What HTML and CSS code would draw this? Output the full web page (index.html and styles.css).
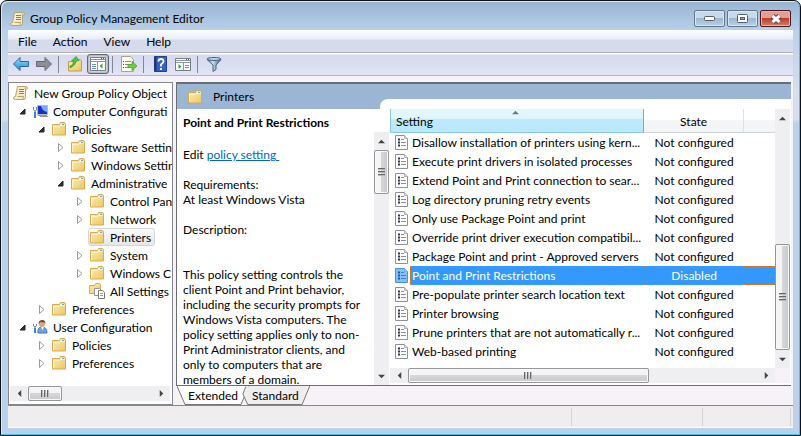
FILE: index.html
```html
<!DOCTYPE html>
<html lang="en">
<head>
    <meta charset="UTF-8">
    <meta name="viewport" content="width=device-width, initial-scale=1.0">
    <title>Group Policy Management Editor</title>
    <link rel="stylesheet" href="styles.css">
</head>
<body>
    <svg class="defs" aria-hidden="true">
        <defs>
            <linearGradient id="gold" x1="0" y1="0" x2="1" y2="1">
                <stop offset="0" stop-color="#fdeeb0"/>
                <stop offset="1" stop-color="#ecc766"/>
            </linearGradient>
            <linearGradient id="blue" x1="0" y1="0" x2="0" y2="1">
                <stop offset="0" stop-color="#9be1fb"/>
                <stop offset="1" stop-color="#118fe0"/>
            </linearGradient>
            <linearGradient id="steel" x1="0" y1="0" x2="1" y2="0">
                <stop offset="0" stop-color="#4b6f8c"/>
                <stop offset="0.4" stop-color="#c9e2f1"/>
                <stop offset="1" stop-color="#3c5a73"/>
            </linearGradient>
        </defs>
        <symbol id="folder" viewBox="0 0 16 16">
            <path d="M1.500 3.500h7l1-2h4l1 1.500v11h-13z" fill="url(#gold)" stroke="#d5aa52"/>
            <path d="M9.500 3.500h4" stroke="#fff"/>
            <path d="M11 3.500h2" stroke="#58a6dd"/>
            <path d="M2.500 13V5.500h6l1-1h4" fill="none" stroke="#fff3c4"/>
        </symbol>
        <symbol id="scroll" viewBox="0 0 16 16">
            <path d="M4.500 1.500h8q2 0 2 1.500t-2 1.500v8q0 2-2 2h-8q-2 0-2-1.500t2-1.500z" fill="#f6ecc9" stroke="#b6a16a"/>
            <path d="M4.500 11.500h6q-1 2 0 3M12.500 4.500q-1-1 0-2" fill="none" stroke="#b6a16a"/>
            <path d="M6 4.500h5M6 6.500h5M6 8.500h5" stroke="#8b815c"/>
        </symbol>
        <symbol id="computer" viewBox="0 0 16 16">
            <path d="M5.500 2.500h10v9h-10z" fill="#1731c2" stroke="#b6bcc8"/>
            <path d="M9 3h6v6q-5-1-6-6z" fill="#7ea4f5"/>
            <path d="M6 12.500h9M8 13.500h8" stroke="#9299a5"/>
            <path d="M1.500 4v3l1.500 1 1.500-1V4M3 8v7" fill="none" stroke="#71808f"/>
            <path d="M3 9v6" stroke="#3c82d5" stroke-width="2"/>
        </symbol>
        <symbol id="user" viewBox="0 0 16 16">
            <path d="M6 14q-1-6 4-6 5 0 5 6z" fill="#6ea3dd" stroke="#4674ae"/>
            <path d="M9 8l1.500 3L12 8z" fill="#fff"/>
            <circle cx="10" cy="5" r="3" fill="#dfa577"/>
            <path d="M6.500 5q0-4 4-4 3 0 3 4l-1-1.500-4-.5z" fill="#674b36"/>
            <path d="M1.500 5v2l1.500 1 1.500-1V5M3 8v6" fill="none" stroke="#71808f"/>
            <path d="M3 9v5" stroke="#3c82d5" stroke-width="2"/>
        </symbol>
        <symbol id="allsettings" viewBox="0 0 16 16">
            <path d="M.5 2.500h5l1-2h4l1 1v9h-11z" fill="url(#gold)" stroke="#d5aa52"/>
            <path d="M5.500 5.500h5l1 1v6h-6z" fill="#fff" stroke="#969696"/>
            <path d="M9.500 7.500h4l2 2v6h-6z" fill="#fff" stroke="#777"/>
            <path d="M11 10.500h3M11 12.500h3" stroke="#999"/>
        </symbol>
        <symbol id="policy" viewBox="0 0 13 15">
            <path d="M.5.5h9l3 3v11H.5z" fill="#fff" stroke="#8f8f98"/>
            <path d="M9.500.5v3h3" fill="#e4e4e8" stroke="#b0b0b8"/>
            <path d="M3 4.500h2M3 7.500h2M3 10.500h2" stroke="#33334d" stroke-width="2"/>
            <path d="M6 4.500h3M6 7.500h5M6 10.500h5" stroke="#8989a8"/>
        </symbol>
        <symbol id="policy-active" viewBox="0 0 13 15">
            <path d="M.5.5h9l3 3v11H.5z" fill="#84c0fb" stroke="#4a92dc"/>
            <path d="M9.500.5v3h3" fill="#a6d2fb" stroke="#6aacec"/>
            <path d="M3 4.500h2M3 7.500h2M3 10.500h2" stroke="#1c579c" stroke-width="2"/>
            <path d="M6 4.500h3M6 7.500h5M6 10.500h5" stroke="#3f83cf"/>
        </symbol>
        <symbol id="closed" viewBox="0 0 9 9">
            <path d="M1.500.5v8L6 4.500z" fill="#fff" stroke="#9b9b9b"/>
        </symbol>
        <symbol id="open" viewBox="0 0 9 9">
            <path d="M6 2v5H1z" fill="#333" stroke="#222"/>
        </symbol>
        <symbol id="arrow" viewBox="0 0 8 8">
            <path d="M0 6l4-4 4 4z" fill="#444"/>
        </symbol>
    </svg>

    <div class="window">
        <header class="titlebar">
            <svg class="icon"><use href="#scroll"/></svg>
            <h1>Group Policy Management Editor</h1>
            <div class="controls">
                <button aria-label="Minimize"><svg width="11" height="5"><rect x=".5" y=".5" width="10" height="4" rx="1" fill="#fff" stroke="#555b6a"/></svg></button>
                <button aria-label="Maximize"><svg width="11" height="9"><rect x=".5" y=".5" width="10" height="8" rx="1" fill="#fff" stroke="#555b6a"/><rect x="3.500" y="3.500" width="4" height="2" fill="#90adca" stroke="#555b6a"/></svg></button>
                <button class="close" aria-label="Close"><svg width="12" height="10"><path d="M2.500 2l7 6m0-6l-7 6" stroke="#484450" stroke-width="5"/><path d="M2.500 2l7 6m0-6l-7 6" stroke="#fff" stroke-width="3"/></svg></button>
            </div>
        </header>

        <div class="client">
            <nav class="menubar">
                <button>File</button>
                <button>Action</button>
                <button>View</button>
                <button>Help</button>
            </nav>

            <div class="toolbar">
                <button aria-label="Back"><svg class="icon" viewBox="0 0 16 16"><path d="M.5 8L7 1.500v4h8.500v5H7v4z" fill="url(#blue)" stroke="#24679e"/></svg></button>
                <button aria-label="Forward"><svg class="icon" viewBox="0 0 16 16"><path d="M15.500 8L9 1.500v4H.5v5H9v4z" fill="#8f8f92" stroke="#66666a"/></svg></button>
                <i class="sep"></i>
                <button aria-label="Up one level"><svg class="icon" viewBox="0 0 16 16"><path d="M1.500 5.500h7l1-2h4l1 1.500v10h-13z" fill="url(#gold)" stroke="#c79b45"/><path d="M3 10q3 0 4-5L4.500 5 9 .5 12 4.500l-2.500.5Q8 10 3 12z" fill="#56c540" stroke="#2d8f27" stroke-width=".7"/></svg></button>
                <button class="pressed" aria-label="Show console tree"><svg class="icon" viewBox="0 0 16 16"><path d="M.5 1.500h15v13H.5z" fill="#fff" stroke="#75808f"/><path d="M1 3.500h14M1 5.500h14M7.500 6v8" stroke="#8c97a5"/><path d="M11 2.500h1M13 2.500h1" stroke="#555"/><path d="M2 8.500h4M2 10.500h4M2 12.500h4" stroke="#6c8fc0"/><path d="M12.500 7.500v5L9.500 10z" fill="#39a52f"/></svg></button>
                <i class="sep"></i>
                <button aria-label="Export list"><svg class="icon" viewBox="0 0 16 16"><path d="M.5.5h9l3 3v12H.5z" fill="#fffdf0" stroke="#aaa58e"/><path d="M2 5.500h1M2 8.500h1M2 11.500h1" stroke="#444"/><path d="M4 5.500h6M4 8.500h4M4 11.500h4" stroke="#8a8a9d"/><path d="M7 8.500h4v-3l5 4.500-5 4.500v-3H7z" fill="#71cc45" stroke="#3b982b" stroke-width=".7"/></svg></button>
                <i class="sep"></i>
                <button aria-label="Help"><svg class="icon" viewBox="0 0 16 16"><path d="M2.500.5h12v15h-12z" fill="#3561c5" stroke="#213f91"/><path d="M3.500 1v14" stroke="#1d3478" stroke-width="2"/><path d="M6.500 5.500q0-2.500 2.500-2.500t2.500 2.200Q11.500 7 9 8.500v2M9 12v2" fill="none" stroke="#fff" stroke-width="1.800"/></svg></button>
                <button aria-label="Show action pane"><svg class="icon" viewBox="0 0 16 16"><path d="M.5 2.500h15v12H.5z" fill="#fff" stroke="#75808f"/><path d="M1 4.500h14M1 6.500h14M8.500 7v7" stroke="#8c97a5"/><path d="M11 3.500h1M13 3.500h1" stroke="#555"/><path d="M10 9.500h4M10 11.500h4" stroke="#6c8fc0"/><path d="M3.500 8v5l3-2.500z" fill="#39a52f"/></svg></button>
                <i class="sep"></i>
                <button aria-label="Filter"><svg class="icon" viewBox="0 0 16 16"><path d="M1 3.500l6 5.500v6.500l3-2V9l5-5.500z" fill="url(#steel)" stroke="#45647d"/><ellipse cx="8" cy="3" rx="7" ry="1.500" fill="#b8d6e8" stroke="#45647d"/></svg></button>
            </div>

            <div class="panes">
                <aside class="tree-pane">
                    <ul class="tree">
                        <li>
                            <div class="node"><span class="label"><svg class="icon"><use href="#scroll"/></svg>New Group Policy Object</span></div>
                            <ul class="first">
                                <li>
                                    <div class="node"><button aria-label="Collapse"><svg><use href="#open"/></svg></button><span class="label"><svg class="icon"><use href="#computer"/></svg>Computer Configurati</span></div>
                                    <ul>
                                        <li>
                                            <div class="node"><button aria-label="Collapse"><svg><use href="#open"/></svg></button><span class="label"><svg class="icon"><use href="#folder"/></svg>Policies</span></div>
                                            <ul>
                                                <li><div class="node"><button aria-label="Expand"><svg><use href="#closed"/></svg></button><span class="label"><svg class="icon"><use href="#folder"/></svg>Software Settin</span></div></li>
                                                <li><div class="node"><button aria-label="Expand"><svg><use href="#closed"/></svg></button><span class="label"><svg class="icon"><use href="#folder"/></svg>Windows Settin</span></div></li>
                                                <li>
                                                    <div class="node"><button aria-label="Collapse"><svg><use href="#open"/></svg></button><span class="label"><svg class="icon"><use href="#folder"/></svg>Administrative</span></div>
                                                    <ul>
                                                        <li><div class="node"><button aria-label="Expand"><svg><use href="#closed"/></svg></button><span class="label"><svg class="icon"><use href="#folder"/></svg>Control Pan</span></div></li>
                                                        <li><div class="node"><button aria-label="Expand"><svg><use href="#closed"/></svg></button><span class="label"><svg class="icon"><use href="#folder"/></svg>Network</span></div></li>
                                                        <li><div class="node leaf"><span class="label selected"><svg class="icon"><use href="#folder"/></svg>Printers</span></div></li>
                                                        <li><div class="node"><button aria-label="Expand"><svg><use href="#closed"/></svg></button><span class="label"><svg class="icon"><use href="#folder"/></svg>System</span></div></li>
                                                        <li><div class="node"><button aria-label="Expand"><svg><use href="#closed"/></svg></button><span class="label"><svg class="icon"><use href="#folder"/></svg>Windows C</span></div></li>
                                                        <li><div class="node leaf"><span class="label"><svg class="icon"><use href="#allsettings"/></svg>All Settings</span></div></li>
                                                    </ul>
                                                </li>
                                            </ul>
                                        </li>
                                        <li><div class="node"><button aria-label="Expand"><svg><use href="#closed"/></svg></button><span class="label"><svg class="icon"><use href="#folder"/></svg>Preferences</span></div></li>
                                    </ul>
                                </li>
                                <li>
                                    <div class="node"><button aria-label="Collapse"><svg><use href="#open"/></svg></button><span class="label"><svg class="icon"><use href="#user"/></svg>User Configuration</span></div>
                                    <ul>
                                        <li><div class="node"><button aria-label="Expand"><svg><use href="#closed"/></svg></button><span class="label"><svg class="icon"><use href="#folder"/></svg>Policies</span></div></li>
                                        <li><div class="node"><button aria-label="Expand"><svg><use href="#closed"/></svg></button><span class="label"><svg class="icon"><use href="#folder"/></svg>Preferences</span></div></li>
                                    </ul>
                                </li>
                            </ul>
                        </li>
                    </ul>
                    <div class="hscroll">
                        <button class="left" aria-label="Scroll left"><svg><use href="#arrow"/></svg></button>
                        <div class="track"><div class="thumb tree-thumb"><i></i></div></div>
                        <button class="right" aria-label="Scroll right"><svg><use href="#arrow"/></svg></button>
                    </div>
                </aside>

                <main class="result-pane">
                    <div class="view">
                        <div class="view-head"><svg class="icon"><use href="#folder"/></svg><h2>Printers</h2></div>
                        <div class="view-body">
                            <section class="detail">
                                <h3>Point and Print Restrictions</h3>
                                <div class="detail-scroll">
                                    <div class="detail-text">
                                        <p class="edit">Edit <a href="#">policy setting&nbsp;</a></p>
                                        <p>Requirements:<br>At least Windows Vista</p>
                                        <p class="desc">Description:</p>
                                        <p>This policy setting controls the<br>client Point and Print behavior,<br>including the security prompts for<br>Windows Vista computers. The<br>policy setting applies only to non-<br>Print Administrator clients, and<br>only to computers that are<br>members of a domain.</p>
                                    </div>
                                    <div class="vscroll">
                                        <button class="up" aria-label="Scroll up"><svg><use href="#arrow"/></svg></button>
                                        <div class="track"><div class="thumb detail-thumb"><i></i></div></div>
                                        <button class="down" aria-label="Scroll down"><svg><use href="#arrow"/></svg></button>
                                    </div>
                                </div>
                            </section>
                            <section class="list">
                                <div class="list-main">
                                    <div class="list-table">
                                        <table>
                                            <colgroup><col class="col-setting"><col class="col-state"><col></colgroup>
                                            <thead>
                                                <tr><th class="sorted" scope="col">Setting<svg class="sort"><use href="#arrow"/></svg></th><th scope="col">State</th><td></td></tr>
                                            </thead>
                                            <tbody>
                                                <tr><td><div class="name"><svg><use href="#policy"/></svg><span>Disallow installation of printers using kern...</span></div></td><td>Not configured</td><td></td></tr>
                                                <tr><td><div class="name"><svg><use href="#policy"/></svg><span>Execute print drivers in isolated processes</span></div></td><td>Not configured</td><td></td></tr>
                                                <tr><td><div class="name"><svg><use href="#policy"/></svg><span>Extend Point and Print connection to sear...</span></div></td><td>Not configured</td><td></td></tr>
                                                <tr><td><div class="name"><svg><use href="#policy"/></svg><span>Log directory pruning retry events</span></div></td><td>Not configured</td><td></td></tr>
                                                <tr><td><div class="name"><svg><use href="#policy"/></svg><span>Only use Package Point and print</span></div></td><td>Not configured</td><td></td></tr>
                                                <tr><td><div class="name"><svg><use href="#policy"/></svg><span>Override print driver execution compatibil...</span></div></td><td>Not configured</td><td></td></tr>
                                                <tr><td><div class="name"><svg><use href="#policy"/></svg><span>Package Point and print - Approved servers</span></div></td><td>Not configured</td><td></td></tr>
                                                <tr class="active"><td><div class="name"><svg><use href="#policy-active"/></svg><span>Point and Print Restrictions</span></div></td><td>Disabled</td><td></td></tr>
                                                <tr><td><div class="name"><svg><use href="#policy"/></svg><span>Pre-populate printer search location text</span></div></td><td>Not configured</td><td></td></tr>
                                                <tr><td><div class="name"><svg><use href="#policy"/></svg><span>Printer browsing</span></div></td><td>Not configured</td><td></td></tr>
                                                <tr><td><div class="name"><svg><use href="#policy"/></svg><span>Prune printers that are not automatically r...</span></div></td><td>Not configured</td><td></td></tr>
                                                <tr><td><div class="name"><svg><use href="#policy"/></svg><span>Web-based printing</span></div></td><td>Not configured</td><td></td></tr>
                                            </tbody>
                                        </table>
                                    </div>
                                    <div class="vscroll">
                                        <button class="up" aria-label="Scroll up"><svg><use href="#arrow"/></svg></button>
                                        <div class="track"><div class="thumb list-thumb"><i></i></div></div>
                                        <button class="down" aria-label="Scroll down"><svg><use href="#arrow"/></svg></button>
                                    </div>
                                </div>
                                <div class="hscroll">
                                    <button class="left" aria-label="Scroll left"><svg><use href="#arrow"/></svg></button>
                                    <div class="track"><div class="thumb wide-thumb"><i></i></div></div>
                                    <button class="right" aria-label="Scroll right"><svg><use href="#arrow"/></svg></button>
                                    <div class="corner"></div>
                                </div>
                            </section>
                        </div>
                    </div>
                    <div class="tabs">
                        <button class="current"><svg viewBox="0 0 72 19" preserveAspectRatio="none"><path d="M0 0l8 18.500h56L72 0" fill="#fff" stroke="#777"/></svg><span>Extended</span></button>
                        <button><svg viewBox="0 0 72 19" preserveAspectRatio="none"><path d="M5 0.500L2 8l5 10.500h57L72 0" fill="#f0edef" stroke="#777"/></svg><span>Standard</span></button>
                    </div>
                </main>
            </div>

            <footer class="statusbar"><span></span><span></span><span></span></footer>
        </div>
    </div>
</body>
</html>
```
FILE: styles.css
```css
* {
    margin: 0;
    padding: 0;
    box-sizing: border-box;
}
body {
    font-family: Lato, "Open Sans", sans-serif;
    font-size: 12px;
    line-height: 15px;
    color: #000;
    background: #fff;
}
button {
    font: inherit;
    color: inherit;
    background: none;
    border: 0;
}
h1, h2 {
    font-size: 12px;
    font-weight: normal;
}
ul {
    list-style: none;
}
svg {
    display: block;
    flex: none;
}
.defs {
    position: absolute;
    width: 0;
    height: 0;
}
.icon {
    width: 16px;
    height: 16px;
}

/* window frame */
.window {
    display: flex;
    flex-direction: column;
    height: 100vh;
    padding: 0 7px 7px;
    border: 1px solid #111;
    border-radius: 7px 7px 0 0;
    background: linear-gradient(#98b4d2, #b9d1ea 30px, #d3e0f0 90px, #d3e0f0 118px, #b9d1ec 122px);
    box-shadow: inset -1px -1px #35cdef, inset 1px 1px #dce9f5;
    overflow: hidden;
}
.titlebar {
    display: flex;
    flex: none;
    align-items: center;
    gap: 4px;
    height: 29px;
    padding: 6px 2px 0;
}
.controls {
    display: flex;
    gap: 2px;
    margin-left: auto;
}
.controls button {
    display: flex;
    align-items: center;
    justify-content: center;
    width: 31px;
    height: 17px;
    border: 1px solid #63768f;
    border-radius: 2px;
    background: linear-gradient(#c8d9ea 45%, #9db6d0 50%, #b9d2e8);
    box-shadow: inset 0 0 0 1px #d9e7f3;
}
.controls .close {
    border-color: #4c1723;
    background: linear-gradient(#e2a093 45%, #bd3c26 50%, #d4836a);
    box-shadow: inset 0 0 0 1px #e9b2a7;
}
.client {
    display: flex;
    flex: 1;
    flex-direction: column;
    min-height: 0;
    background: #f6f2f7;
}

/* menu and toolbar */
.menubar {
    display: flex;
    flex: none;
    height: 23px;
    padding-left: 2px;
    background: linear-gradient(#fff, #e9ecf9 9px, #d5daed 10px, #d6dbee);
    border-bottom: 1px solid #b2b2b8;
}
.menubar button {
    padding: 0 8px;
}
.toolbar {
    display: flex;
    flex: none;
    align-items: center;
    gap: 1px;
    height: 23px;
    padding-left: 2px;
    background: linear-gradient(#fff 1px, #d5daee 2px, #d8ddf2 10px, #e3e4f6);
    border-bottom: 1px solid #b5b6c5;
}
.toolbar button {
    display: flex;
    align-items: center;
    justify-content: center;
    width: 22px;
    height: 20px;
}
.toolbar .pressed {
    border: 1px solid #626672;
    border-radius: 3px;
    background: #d2d6e2;
    box-shadow: inset 0 0 2px #777;
}
.sep {
    width: 1px;
    height: 17px;
    margin: 0 4px 0 2px;
    background: #85858e;
}

/* panes */
.panes {
    display: flex;
    flex: 1;
    gap: 3px;
    min-height: 0;
    padding: 6px 2px 0 0;
}
.tree-pane {
    display: flex;
    flex: none;
    flex-direction: column;
    width: 21%;
    min-width: 165px;
    border: 1px solid #85878f;
    background: #fff;
}
.tree {
    flex: 1;
    min-height: 0;
    padding: 1px 0 0 4px;
    overflow: hidden;
}
.tree ul {
    padding-left: 19px;
}
.tree .first {
    padding-left: 6px;
}
.node {
    display: flex;
    align-items: center;
    height: 18px;
    white-space: nowrap;
}
.node button {
    flex: none;
    width: 13px;
}
.node button svg {
    width: 9px;
    height: 9px;
}
.leaf {
    padding-left: 12px;
}
.label {
    display: flex;
    align-items: center;
    gap: 5px;
    height: 18px;
}
.leaf .label {
    padding: 0 3px 0 0;
    border: 1px solid transparent;
    border-radius: 3px;
}
.leaf .selected {
    border-color: #d4d4d4;
    background: linear-gradient(#fafafa, #e6e6e6);
}

/* scrollbars */
.hscroll, .vscroll {
    display: flex;
    flex: none;
    background: #efeef0;
}
.hscroll {
    height: 15px;
}
.tree-pane .hscroll {
    margin: 0 2px 3px 1px;
}
.vscroll {
    flex-direction: column;
    width: 15px;
}
.hscroll button, .vscroll button {
    display: flex;
    align-items: center;
    justify-content: center;
    flex: none;
    width: 18px;
    height: 15px;
}
.vscroll button {
    width: 15px;
    height: 18px;
}
.hscroll button svg, .vscroll button svg {
    width: 7px;
    height: 7px;
}
.left svg {
    transform: rotate(-90deg);
}
.right svg {
    transform: rotate(90deg);
}
.down svg {
    transform: rotate(180deg);
}
.track {
    display: flex;
    flex: 1;
    min-width: 0;
    min-height: 0;
}
.vscroll .track {
    flex-direction: column;
}
.corner {
    width: 15px;
    background: #f6f2f7;
}
.thumb {
    display: flex;
    align-items: center;
    justify-content: center;
    border: 1px solid #969699;
    border-radius: 2px;
    background: linear-gradient(#f4f4f4 45%, #d6d6d8 50%, #c9c9cc);
    box-shadow: inset 0 0 0 1px #f9f9f9;
}
.vscroll .thumb {
    background: linear-gradient(90deg, #f4f4f4 45%, #d6d6d8 50%, #c9c9cc);
}
.thumb i {
    width: 8px;
    height: 7px;
    background: repeating-linear-gradient(90deg, #666 0 1px, #bbb 1px 2px, transparent 2px 3px);
}
.vscroll .thumb i {
    width: 7px;
    height: 8px;
    background: repeating-linear-gradient(#666 0 1px, #bbb 1px 2px, transparent 2px 3px);
}
.tree-thumb {
    width: 34px;
}
.detail-thumb {
    height: 44px;
}
.list-thumb {
    height: 106px;
    margin-top: auto;
}
.wide-thumb {
    width: 69%;
}

/* result pane */
.result-pane {
    display: flex;
    flex: 1;
    flex-direction: column;
    min-width: 0;
}
.view {
    display: flex;
    flex: 1;
    flex-direction: column;
    min-height: 0;
    border-top: 2px solid #6b6d74;
    border-left: 1px solid #6b6d74;
    border-bottom: 1px solid #6b6d74;
    background: #9bb5d5;
}
.view-head {
    display: flex;
    flex: none;
    align-items: center;
    gap: 10px;
    height: 25px;
    padding-left: 10px;
}
.view-body {
    display: flex;
    flex: 1;
    min-height: 0;
    background: #fff;
}
.detail {
    display: flex;
    flex: none;
    flex-direction: column;
    width: 213px;
    padding: 6px 0 0 6px;
}
.detail h3 {
    height: 17px;
    font-size: 12px;
    font-weight: bold;
}
.detail-scroll {
    display: flex;
    flex: 1;
    min-height: 0;
}
.detail-text {
    flex: 1;
    padding-top: 15px;
    overflow: hidden;
    white-space: nowrap;
}
.detail-text p {
    margin-bottom: 15px;
}
.detail-text .desc {
    margin-bottom: 30px;
}
.detail-text a {
    color: #0066cc;
}
.detail .vscroll {
    margin-right: 1px;
}
/* the list reaches up into the blue header with a rounded corner */
.list {
    display: flex;
    flex: 1;
    flex-direction: column;
    min-width: 0;
    margin: -10px 0 0 -10px;
    padding: 10px 1px 2px 10px;
    border-radius: 8px 0 0 0;
    background: linear-gradient(#fff, #fff) 0 0 / 100% 23px no-repeat;
}
.list-main {
    display: flex;
    flex: 1;
    min-height: 0;
}
.list-table {
    flex: 1;
    min-width: 0;
    overflow: hidden;
}
table {
    width: 100%;
    table-layout: fixed;
    border-collapse: separate;
    border-spacing: 0;
    white-space: nowrap;
}
.col-setting {
    width: 66%;
}
.col-state {
    width: 26%;
}
thead th, thead td {
    position: relative;
    height: 24px;
    padding-top: 1px;
    font-weight: normal;
    background: linear-gradient(#fff 45%, #f5f6f8 50%, #f2f4f6);
    border-right: 1px solid #dcdfe3;
    border-bottom: 1px solid #cfd2d6;
}
thead td {
    border-right: 0;
}
thead .sorted {
    padding-left: 5px;
    text-align: left;
    background: linear-gradient(#e2f6fe 40%, #bfeafd 45%, #b8e8fb);
    border-left: 1px solid #8cc6df;
    border-right: 1px solid #6cb3d3;
    border-bottom: 1px solid #8fc8e0;
}
.sort {
    position: absolute;
    top: 0;
    left: 48%;
    width: 7px;
    height: 7px;
    opacity: 0.7;
}
tbody td {
    height: 19px;
    text-align: center;
}
.name {
    display: flex;
    align-items: center;
    gap: 2px;
    height: 19px;
    padding-left: 5px;
    text-align: left;
}
.name svg {
    width: 13px;
    height: 15px;
}
.name span {
    flex: 1;
    min-width: 0;
    height: 19px;
    padding: 1px 0 1px 1px;
    border: 1px solid transparent;
    border-right: 0;
}
.active {
    color: #fff;
}
.active td + td, .active span {
    background: #3399ff;
    border: 1px dotted #d5792d;
    border-width: 1px 0;
}
.active span {
    border-left-width: 1px;
}

/* view tabs */
.tabs {
    display: flex;
    flex: none;
    height: 19px;
    padding-left: 1px;
}
.tabs button {
    position: relative;
    padding: 0 11px;
}
.tabs button + button {
    margin-left: -8px;
}
.tabs svg {
    position: absolute;
    top: 0;
    left: 0;
    width: 100%;
    height: 19px;
}
.tabs span {
    position: relative;
}

.statusbar {
    display: flex;
    flex: none;
    height: 23px;
    padding: 2px 2px 1px 0;
    border-top: 1px solid #85878f;
    border-bottom: 1px solid #fff;
    background: #f0edee;
}
.statusbar span {
    flex: 2;
    border-right: 1px solid #d4d2d4;
}
.statusbar span:first-child {
    flex: 13;
}
.statusbar span:nth-child(2) {
    flex: 3;
}
```
